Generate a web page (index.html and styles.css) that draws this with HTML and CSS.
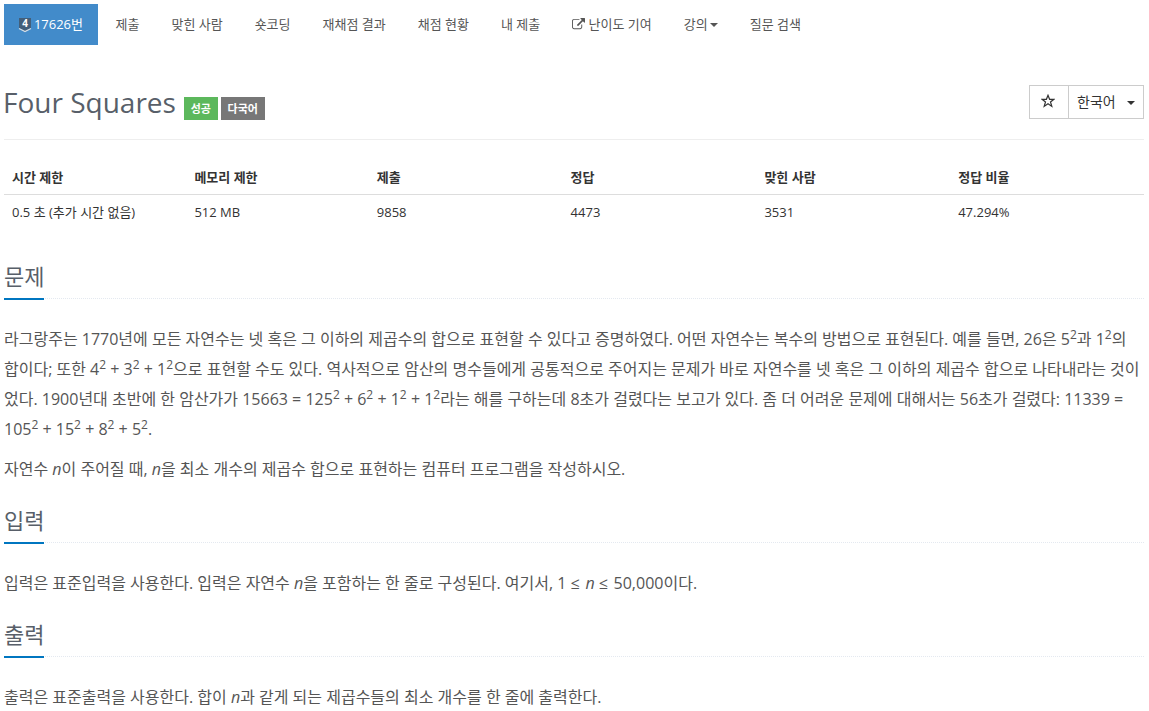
FILE: index.html
```html
<!DOCTYPE html>
<html lang="ko">
<head>
    <meta charset="UTF-8">
    <title>17626번: Four Squares</title>
    <link rel="stylesheet" href="styles.css">
</head>
<body>
    <div class="container">
        <ul class="problem-menu">
            <li class="active"><a href="#"><svg class="tier" viewBox="0 0 12 15"><path fill="#435f7a" d="M0 0h12v10.500L6 14 0 10.500z"/><path fill="none" stroke="#d5e2ec" stroke-width="1.3" d="M0 10.500l6 3.100 6-3.100"/><text x="6" y="9.300">4</text></svg> 17626번</a></li>
            <li><a href="#">제출</a></li>
            <li><a href="#">맞힌 사람</a></li>
            <li><a href="#">숏코딩</a></li>
            <li><a href="#">재채점 결과</a></li>
            <li><a href="#">채점 현황</a></li>
            <li><a href="#">내 제출</a></li>
            <li><a href="#"><svg class="external" viewBox="0 0 1792 1792"><path d="M1408 928v320q0 119-84.500 203.500t-203.500 84.500h-832q-119 0-203.500-84.500t-84.500-203.500v-832q0-119 84.500-203.500t203.500-84.500h704q14 0 23 9t9 23v64q0 14-9 23t-23 9h-704q-66 0-113 47t-47 113v832q0 66 47 113t113 47h832q66 0 113-47t47-113v-320q0-14 9-23t23-9h64q14 0 23 9t9 23zm384-864v512q0 26-19 45t-45 19-45-19l-176-176-652 652q-10 10-23 10t-23-10l-114-114q-10-10-10-23t10-23l652-652-176-176q-19-19-19-45t19-45 45-19h512q26 0 45 19t19 45z"/></svg> 난이도 기여</a></li>
            <li><a href="#">강의<span class="caret"></span></a></li>
            <li><a href="#">질문 검색</a></li>
        </ul>

        <div class="page-header">
            <div class="title">
                <h1>Four Squares</h1>
                <span class="label label-success">성공</span>
                <span class="label label-gray">다국어</span>
            </div>
            <div class="btn-group">
                <button class="btn btn-star"><svg viewBox="0 0 14 14"><path d="M7 1.300l1.600 4h4.300L9.500 8l1.300 4.400L7 9.800l-3.800 2.600L4.500 8 1.100 5.300h4.300z"/></svg></button>
                <button class="btn btn-lang">한국어<span class="caret"></span></button>
            </div>
        </div>

        <table class="problem-info">
            <thead>
                <tr>
                    <th class="narrow">시간 제한</th>
                    <th class="narrow">메모리 제한</th>
                    <th>제출</th>
                    <th>정답</th>
                    <th>맞힌 사람</th>
                    <th>정답 비율</th>
                </tr>
            </thead>
            <tbody>
                <tr>
                    <td>0.5 초 (추가 시간 없음)</td>
                    <td>512 MB</td>
                    <td>9858</td>
                    <td>4473</td>
                    <td>3531</td>
                    <td>47.294%</td>
                </tr>
            </tbody>
        </table>

        <section>
            <div class="headline"><h2>문제</h2></div>
            <div class="problem-text">
                <p>라그랑주는 1770년에 모든 자연수는 넷 혹은 그 이하의 제곱수의 합으로 표현할 수 있다고 증명하였다. 어떤 자연수는 복수의 방법으로 표현된다. 예를 들면, 26은 5<sup>2</sup>과 1<sup>2</sup>의 합이다; 또한 4<sup>2</sup> + 3<sup>2</sup> + 1<sup>2</sup>으로 표현할 수도 있다. 역사적으로 암산의 명수들에게 공통적으로 주어지는 문제가 바로 자연수를 넷 혹은 그 이하의 제곱수 합으로 나타내라는 것이었다. 1900년대 초반에 한 암산가가 15663 = 125<sup>2</sup> + 6<sup>2</sup> + 1<sup>2</sup> + 1<sup>2</sup>라는 해를 구하는데 8초가 걸렸다는 보고가 있다. 좀 더 어려운 문제에 대해서는 56초가 걸렸다: 11339 = 105<sup>2</sup> + 15<sup>2</sup> + 8<sup>2</sup> + 5<sup>2</sup>.</p>
                <p>자연수 <em>n</em>이 주어질 때, <em>n</em>을 최소 개수의 제곱수 합으로 표현하는 컴퓨터 프로그램을 작성하시오.</p>
            </div>
        </section>

        <section>
            <div class="headline"><h2>입력</h2></div>
            <div class="problem-text">
                <p>입력은 표준입력을 사용한다. 입력은 자연수 <em>n</em>을 포함하는 한 줄로 구성된다. 여기서, 1 <span class="rel">≤</span> <em>n</em> <span class="rel">≤</span> 50,000이다.</p>
            </div>
        </section>

        <section>
            <div class="headline"><h2>출력</h2></div>
            <div class="problem-text">
                <p>출력은 표준출력을 사용한다. 합이 <em>n</em>과 같게 되는 제곱수들의 최소 개수를 한 줄에 출력한다.</p>
            </div>
        </section>
    </div>
</body>
</html>
```

FILE: styles.css
```css
* {
    box-sizing: border-box;
}
body {
    margin: 0;
    background: #fff;
    color: #333;
    font-family: "Open Sans", "Noto Sans CJK KR", sans-serif;
    font-size: 13px;
    line-height: 21px;
}
.container {
    width: 1140px;
    margin-left: 4px;
    padding-top: 4px;
}
.problem-menu {
    display: flex;
    gap: 2px;
    margin: 0;
    padding: 0;
    list-style: none;
}
.problem-menu a {
    display: block;
    height: 41px;
    padding: 10px 15px;
    color: #555;
    text-decoration: none;
    white-space: nowrap;
}
.problem-menu .active {
    margin-right: 1px;
}
.problem-menu .active a {
    padding: 10px 14.5px;
    background: #428bca;
    color: #fff;
}
.tier {
    width: 12px;
    height: 15px;
    overflow: visible;
    vertical-align: -4px;
}
.tier text {
    fill: #fff;
    font-size: 10px;
    font-weight: 700;
    text-anchor: middle;
}
.external {
    width: 13px;
    height: 13px;
    fill: #555;
    vertical-align: -2px;
}
.caret {
    display: inline-block;
    border-top: 4px solid;
    border-right: 4px solid transparent;
    border-left: 4px solid transparent;
    vertical-align: middle;
}
.problem-menu .caret {
    margin: -2px 0 0 2px;
}
.page-header {
    display: flex;
    justify-content: space-between;
    height: 95px;
    padding-top: 40px;
    border-bottom: 1px solid #eee;
}
.title {
    display: flex;
    align-items: flex-start;
}
.title h1 {
    margin: 0 8px 0 -1px;
    color: #585f69;
    font-size: 28px;
    font-weight: 400;
    line-height: 34px;
}
.label {
    height: 23px;
    margin: 12px 3px 0 0;
    padding: 0 6.8px;
    color: #fff;
    font-size: 11px;
    font-weight: 700;
    line-height: 23px;
}
.label-success {
    background: #5cb85c;
}
.label-gray {
    background: #777;
}
.btn-group {
    display: flex;
    height: 34px;
}
.btn {
    display: flex;
    align-items: center;
    border: 1px solid #ccc;
    background: #fff;
    color: #333;
    font: inherit;
}
.btn-star {
    justify-content: center;
    width: 40px;
    margin-right: -1px;
    padding: 0 2px 2px 0;
}
.btn-star svg {
    width: 14px;
    height: 14px;
    fill: none;
    stroke: #333;
    stroke-width: 1.2;
}
.btn-lang {
    justify-content: space-between;
    width: 76px;
    padding: 0 8px 1px;
    font-size: 14px;
}
.btn-lang .caret {
    margin-top: 2px;
}
.problem-info {
    width: 100%;
    margin: 20px 0;
    border-collapse: collapse;
    table-layout: fixed;
}
.problem-info th,
.problem-info td {
    width: 17%;
    height: 35px;
    padding: 1px 8px 0;
    text-align: left;
}
.problem-info th {
    height: 34px;
    border-bottom: 1px solid #ddd;
}
.problem-info .narrow {
    width: 16%;
}
section {
    padding-top: 9px;
}
.problem-info + section {
    padding-top: 10px;
}
.headline {
    display: flex;
    border-bottom: 1px dotted #e4e9f0;
}
.headline h2 {
    margin: 0 0 -2px;
    padding: 1px 0 5px;
    border-bottom: 2px solid #0076c0;
    color: #585f69;
    font-size: 22px;
    font-weight: 400;
    line-height: 33px;
}
.problem-text {
    padding-top: 25px;
    color: #555;
    font-size: 16px;
    line-height: 30px;
}
.problem-text p {
    margin: 0 0 10px;
}
.problem-text sup {
    position: relative;
    top: -0.5em;
    font-size: 75%;
    line-height: 0;
    vertical-align: baseline;
}
.rel {
    letter-spacing: 1.5px;
}
```
